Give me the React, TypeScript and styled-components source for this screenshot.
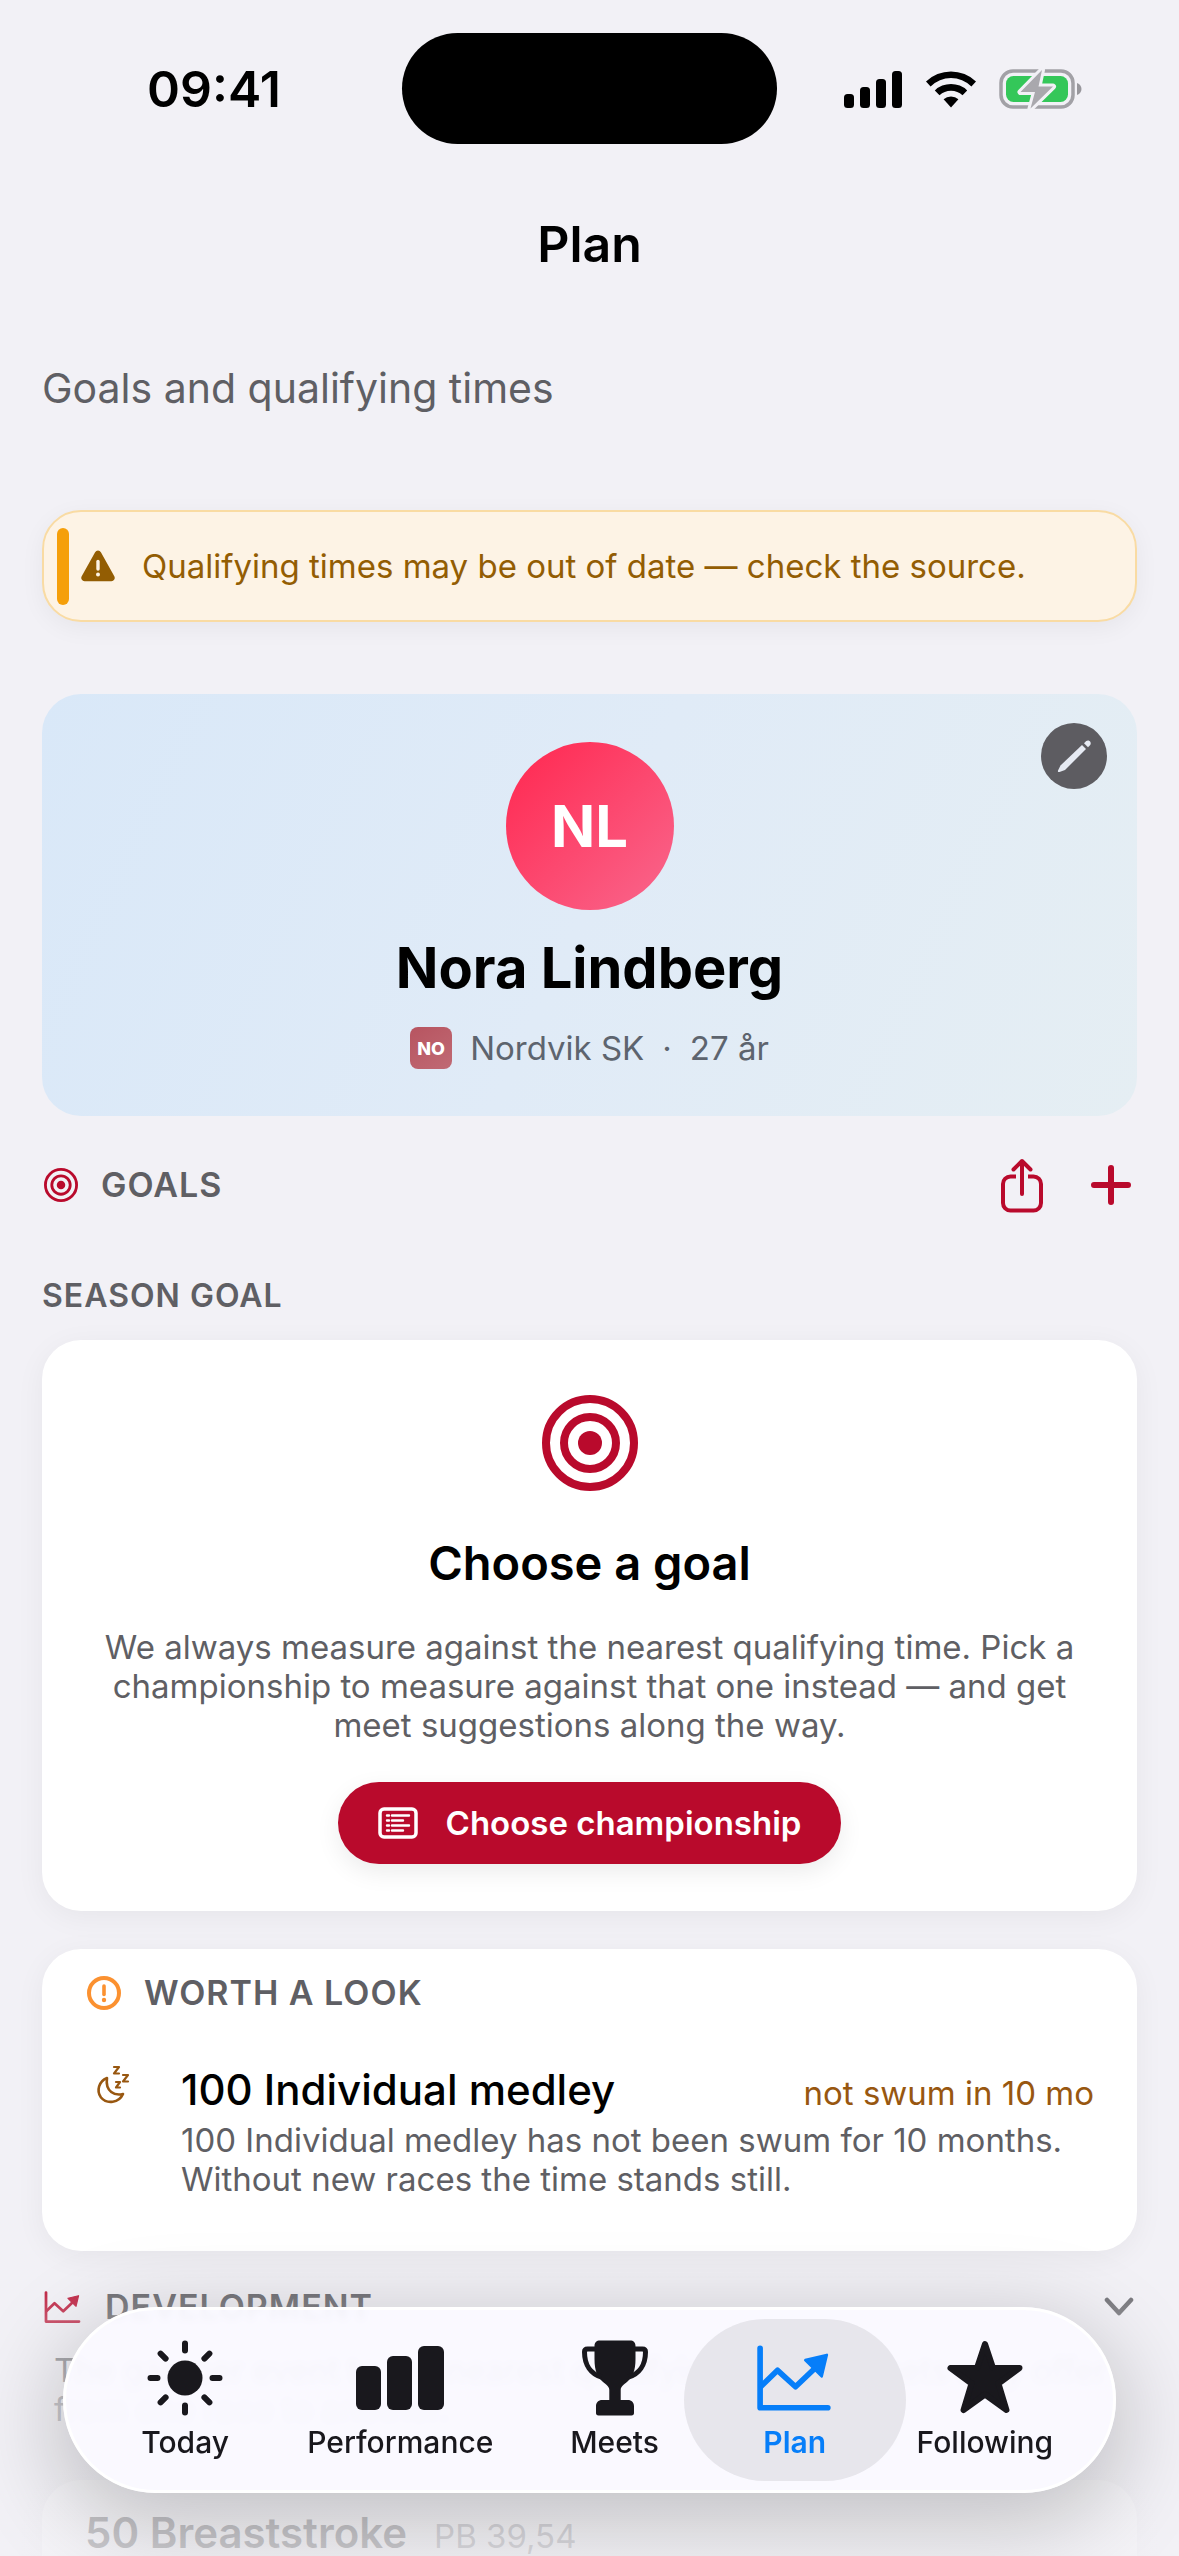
import React from 'react';
import styled, { createGlobalStyle, css } from 'styled-components';

const color = {
  page: '#f2f1f6',
  ink: '#000000',
  muted: '#5f5f64',
  crimson: '#b90a2c',
  amber: '#f59f0a',
  amberText: '#935d03',
  orange: '#fb9130',
  brown: '#985710',
  blue: '#067ef9',
  tabInk: '#19181d',
};

const GlobalStyle = createGlobalStyle`
  *, *::before, *::after { box-sizing: border-box; }
  body {
    margin: 0;
    background: ${color.page};
    color: ${color.ink};
    font-family: Inter, "Noto Sans", sans-serif;
    -webkit-font-smoothing: antialiased;
  }
  h1, h2, h3, p { margin: 0; }
  button {
    margin: 0;
    padding: 0;
    border: 0;
    background: none;
    color: inherit;
    font: inherit;
    cursor: pointer;
  }
  svg { display: block; flex: none; }
`;

const Screen = styled.div`
  position: relative;
  display: flex;
  flex-direction: column;
  height: 100vh;
  overflow: hidden;
  background: ${color.page};
`;

const StatusBar = styled.div`
  display: grid;
  grid-template-columns: 1fr 375px 1fr;
  align-items: center;
  flex: none;
  height: 177px;
`;

const Clock = styled.div`
  padding-left: 26px;
  text-align: center;
  font-size: 50px;
  font-weight: 600;
`;

const Island = styled.div`
  height: 111px;
  border-radius: 56px;
  background: #000;
`;

const StatusIcons = styled.div`
  display: flex;
  align-items: center;
  justify-content: center;
  gap: 22px;
  padding-right: 30px;
`;

const NavBar = styled.header`
  display: flex;
  align-items: center;
  justify-content: center;
  flex: none;
  height: 134px;
`;

const PageTitle = styled.h1`
  font-size: 50px;
  font-weight: 600;
`;

const Content = styled.main`
  flex: 1;
  min-height: 0;
  padding: 50px 42px 0;
  overflow-y: auto;
  scrollbar-width: none;
`;

const Subtitle = styled.p`
  margin-bottom: 95px;
  color: ${color.muted};
  font-size: 41px;
  line-height: 54px;
`;

const Banner = styled.div`
  display: flex;
  align-items: center;
  height: 112px;
  margin-bottom: 72px;
  padding: 0 13px;
  border: 2px solid #f9dba3;
  border-radius: 39px;
  background: #fdf3e5;
  box-shadow: 0 6px 24px rgba(0, 0, 0, 0.05);
  color: ${color.amberText};
  font-size: 33px;
`;

const BannerMark = styled.span`
  width: 12px;
  height: 77px;
  margin-right: 12px;
  border-radius: 6px;
  background: ${color.amber};
`;

const BannerText = styled.p`
  margin-left: 27px;
`;

const ProfileCard = styled.section`
  position: relative;
  display: flex;
  flex-direction: column;
  align-items: center;
  padding: 48px 40px 47px;
  border-radius: 39px;
  background: linear-gradient(115deg, #d9e8f8 0%, #e0ebf7 50%, #e5eef3 100%);
`;

const Avatar = styled.div`
  display: flex;
  align-items: center;
  justify-content: center;
  width: 168px;
  height: 168px;
  margin-bottom: 23px;
  border-radius: 50%;
  background: linear-gradient(135deg, #ff2d55 10%, #f9648a 95%);
  color: #fff;
  font-size: 58px;
  font-weight: 700;
`;

const ProfileName = styled.h2`
  margin-bottom: 24px;
  font-size: 56px;
  font-weight: 700;
  line-height: 70px;
`;

const ProfileMeta = styled.div`
  display: flex;
  align-items: center;
  gap: 18px;
  height: 42px;
  color: #5d646e;
  font-size: 33px;
`;

const ClubBadge = styled.span`
  display: flex;
  align-items: center;
  justify-content: center;
  width: 42px;
  height: 42px;
  border-radius: 8px;
  background: linear-gradient(145deg, #b75460, #c06a74);
  color: #fff;
  font-size: 18px;
  font-weight: 800;
`;

const EditButton = styled.button`
  position: absolute;
  top: 29px;
  right: 30px;
  display: flex;
  align-items: center;
  justify-content: center;
  width: 66px;
  height: 66px;
  border-radius: 50%;
  background: #5d5c61;
`;

const GoalsBar = styled.div`
  display: flex;
  align-items: center;
  justify-content: space-between;
  height: 138px;
  margin-bottom: 22px;
  padding-right: 5px;
`;

const Actions = styled.div`
  display: flex;
  align-items: center;
  gap: 46px;
`;

const SectionHeading = styled.h2`
  display: flex;
  align-items: center;
  gap: 23px;
  padding-left: 2px;
  color: ${color.muted};
  font-size: 34px;
  font-weight: 600;
  line-height: 40px;
  letter-spacing: 1px;
`;

const GroupLabel = styled.h3`
  margin-bottom: 24px;
  color: ${color.muted};
  font-size: 32px;
  font-weight: 600;
  line-height: 40px;
  letter-spacing: 1px;
`;

const card = css`
  border-radius: 39px;
  background: #fff;
  box-shadow: 0 6px 30px rgba(0, 0, 0, 0.05);
`;

const GoalCard = styled.section`
  ${card}
  display: flex;
  flex-direction: column;
  align-items: center;
  margin-bottom: 38px;
  padding: 55px 48px 47px;
`;

const GoalTitle = styled.h3`
  margin: 42px 0 35px;
  font-size: 47px;
  font-weight: 600;
  line-height: 60px;
`;

const GoalText = styled.p`
  margin-bottom: 37px;
  color: ${color.muted};
  font-size: 33px;
  line-height: 39px;
  text-align: center;
`;

const PrimaryButton = styled.button`
  display: flex;
  align-items: center;
  gap: 28px;
  height: 82px;
  padding: 0 40px;
  border-radius: 41px;
  background: ${color.crimson};
  box-shadow: 0 8px 24px rgba(0, 0, 0, 0.08);
  color: #fff;
  font-size: 33px;
  font-weight: 600;
`;

const NoticeCard = styled.section`
  ${card}
  margin-bottom: 36px;
  padding: 24px 43px 52px;
`;

const Notice = styled.article`
  display: grid;
  grid-template-columns: 56px 1fr;
  column-gap: 40px;
  margin-top: 52px;
`;

const NoticeIcon = styled.span`
  display: flex;
  justify-content: center;
`;

const NoticeTop = styled.div`
  display: flex;
  align-items: baseline;
  justify-content: space-between;
  margin-bottom: 6px;
`;

const NoticeTitle = styled.h3`
  font-size: 42px;
  font-weight: 500;
  line-height: 50px;
`;

const NoticeAge = styled.span`
  color: ${color.brown};
  font-size: 33px;
  line-height: 40px;
`;

const NoticeText = styled.p`
  color: ${color.muted};
  font-size: 33px;
  line-height: 39px;
`;

const DevelopmentBar = styled.div`
  display: flex;
  align-items: center;
  justify-content: space-between;
  margin-bottom: 24px;
  padding-right: 3px;
`;

const DevelopmentText = styled.p`
  margin-bottom: 51px;
  padding: 0 12px;
  color: ${color.muted};
  font-size: 33px;
  line-height: 39px;
`;

const EventCard = styled.section`
  ${card}
  display: flex;
  align-items: baseline;
  gap: 27px;
  padding: 28px 43px 60px;
`;

const EventTitle = styled.h3`
  font-size: 42px;
  font-weight: 600;
  line-height: 50px;
`;

const EventBest = styled.span`
  color: ${color.muted};
  font-size: 33px;
  line-height: 40px;
`;

const BottomFade = styled.div`
  position: absolute;
  right: 0;
  bottom: 0;
  left: 0;
  height: 290px;
  background: linear-gradient(
    rgba(242, 241, 246, 0) 0%,
    rgba(242, 241, 246, 0.3) 18%,
    rgba(242, 241, 246, 0.7) 48%,
    rgba(242, 241, 246, 0.84) 100%
  );
  pointer-events: none;
`;

const TabBar = styled.nav`
  position: absolute;
  right: 63px;
  bottom: 63px;
  left: 63px;
  display: grid;
  grid-template-columns: 220fr 210fr 218fr 142fr 238fr;
  height: 186px;
  padding: 0 9px;
  border: 3px solid #fff;
  border-radius: 93px;
  background: rgba(250, 249, 255, 0.95);
  box-shadow: 0 24px 90px 8px rgba(0, 0, 0, 0.21);
  backdrop-filter: blur(3px);
`;

const TabButton = styled.button<{ $active: boolean }>`
  position: relative;
  display: flex;
  flex-direction: column;
  align-items: center;
  gap: 3px;
  padding-top: 27px;
  color: ${(p) => (p.$active ? color.blue : color.tabInk)};
  font-size: 30px;
  font-weight: ${(p) => (p.$active ? 600 : 500)};
  line-height: 40px;

  ${(p) =>
    p.$active &&
    css`
      &::before {
        content: '';
        position: absolute;
        inset: 9px -40px;
        border-radius: 81px;
        background: #e7e6ec;
      }
    `}

  & > * {
    position: relative;
  }
`;

const TabIcon = styled.span`
  display: flex;
  align-items: center;
  justify-content: center;
  height: 82px;
`;

const SignalIcon = () => (
  <svg width="60" height="38" viewBox="0 0 60 38">
    <rect x="1" y="24" width="10" height="14" rx="3.5" />
    <rect x="17" y="17" width="10" height="21" rx="3.5" />
    <rect x="33" y="9" width="10" height="29" rx="3.5" />
    <rect x="49" y="1" width="10" height="37" rx="3.5" />
  </svg>
);

const WifiIcon = () => (
  <svg width="52" height="38" viewBox="0 0 52 38">
    <path d="M1 11.5a36 36 0 0 1 50 0l-4.6 4.9a29 29 0 0 0-40.8 0Z" />
    <path d="M9.8 20.4a23.5 23.5 0 0 1 32.4 0l-4.7 4.9a16.7 16.7 0 0 0-23 0Z" />
    <path d="M18.6 29.3a11 11 0 0 1 14.8 0L26 37.5Z" />
  </svg>
);

const BatteryIcon = () => (
  <svg width="84" height="44" viewBox="0 0 84 44">
    <rect x="2" y="4" width="72" height="36" rx="12" fill="none" stroke="#a2a1a6" strokeWidth="3.5" />
    <path d="M78 16c6 2 6 10 0 12Z" fill="#98979c" />
    <rect x="7" y="9" width="62" height="26" rx="7.5" fill="#34c759" />
    <path
      d="M43 3 21.500 25H36l-4.500 16.500L54 19.500H39.500Z"
      fill="#a9a8ad"
      stroke="#f2f1f6"
      strokeWidth="6"
      strokeLinejoin="round"
      paintOrder="stroke"
    />
  </svg>
);

const WarningIcon = () => (
  <svg width="34" height="32" viewBox="0 0 34 32">
    <path
      d="M14.100 2.200a3.400 3.400 0 0 1 5.800 0L33.300 26.300a3.300 3.300 0 0 1-2.900 4.900H3.600a3.300 3.300 0 0 1-2.900-4.900Z"
      fill={color.amberText}
    />
    <path d="M17 11.500v7.500" stroke="#fdf3e5" strokeWidth="3.400" strokeLinecap="round" />
    <circle cx="17" cy="24.500" r="2" fill="#fdf3e5" />
  </svg>
);

const PencilIcon = () => (
  <svg width="36" height="36" viewBox="0 0 36 36" fill="#e6eaf3">
    <path d="M26 7 30 11 9 32 3.500 34Q1.500 34.500 2 32.500L4.500 27.500Z" />
    <path d="m28 5.200 2.200-2.200c2.800-1.800 5.800 1.200 4 4L32 9.200Z" />
  </svg>
);

const TargetIcon = ({ size }: { size: number }) => (
  <svg width={size} height={size} viewBox="0 0 96 96" fill="none" stroke={color.crimson}>
    <circle cx="48" cy="48" r="44" strokeWidth="8" />
    <circle cx="48" cy="48" r="26" strokeWidth="8" />
    <circle cx="48" cy="48" r="12" fill={color.crimson} stroke="none" />
  </svg>
);

const ShareIcon = () => (
  <svg
    width="44"
    height="56"
    viewBox="0 0 44 56"
    fill="none"
    stroke={color.crimson}
    strokeWidth="4"
    strokeLinecap="butt"
    strokeLinejoin="round"
  >
    <path d="M16 19.500h-5.500a7.500 7.500 0 0 0-7.500 7.500v19a7.500 7.500 0 0 0 7.500 7.500h23a7.500 7.500 0 0 0 7.500-7.500V27a7.500 7.500 0 0 0-7.500-7.500H28" />
    <path d="M22 37V4M13.500 12.500 22 4l8.500 8.500" strokeLinecap="round" />
  </svg>
);

const PlusIcon = () => (
  <svg width="42" height="42" viewBox="0 0 42 42" stroke={color.crimson} strokeWidth="6" strokeLinecap="round">
    <path d="M21 4v34M4 21h34" />
  </svg>
);

const ListIcon = () => (
  <svg width="40" height="32" viewBox="0 0 40 32" fill="none" stroke="#fff">
    <rect x="2" y="2" width="36" height="28" rx="4" strokeWidth="3.500" />
    <path
      d="M9 8.500h2M14 8.500h17M9 13.500h2M14 13.500h11M9 18.500h2M14 18.500h17M9 23.500h2M14 23.500h11"
      strokeWidth="2.400"
      strokeLinecap="round"
    />
  </svg>
);

const AlertIcon = () => (
  <svg width="34" height="34" viewBox="0 0 34 34" fill="none" stroke={color.orange}>
    <circle cx="17" cy="17" r="15" strokeWidth="4" />
    <path d="M17 10v8.500" strokeWidth="3.600" strokeLinecap="round" />
    <circle cx="17" cy="24" r="2.200" fill={color.orange} stroke="none" />
  </svg>
);

const SleepIcon = () => (
  <svg
    width="38"
    height="44"
    viewBox="-1 3 38 44"
    fill="none"
    stroke={color.brown}
    strokeWidth="2.600"
    strokeLinejoin="round"
    strokeLinecap="round"
  >
    <path d="M12 16C4 19 1 29 6 35.500c6 7 18 5.500 22-3.500-8 2-18-2-16-16Z" />
    <path d="M19 5h5l-5 6.500h5M28 13h5l-5 6.500h5M21 20h4l-4 5.500h4" strokeWidth="2.200" />
  </svg>
);

const ChartIcon = ({ size, tint }: { size: number; tint: string }) => (
  <svg
    width={size}
    height={size}
    viewBox="0 0 76 76"
    fill="none"
    stroke={tint}
    strokeWidth="5.500"
    strokeLinejoin="round"
    strokeLinecap="round"
  >
    <path d="M4 9v58h66" />
    <path d="M5 46 21 30.500l17.500 16L60 26" />
    <path d="m48 20.500 21-5-5 21Z" fill={tint} strokeWidth="2.500" />
  </svg>
);

const ChevronIcon = () => (
  <svg
    width="30"
    height="20"
    viewBox="0 0 30 20"
    fill="none"
    stroke={color.muted}
    strokeWidth="4.500"
    strokeLinecap="round"
    strokeLinejoin="round"
  >
    <path d="m3 3 12 13L27 3" />
  </svg>
);

const SunIcon = () => (
  <svg width="76" height="76" viewBox="0 0 76 76" stroke="currentColor" strokeWidth="6" strokeLinecap="round">
    <circle cx="38" cy="38" r="17.500" fill="currentColor" stroke="none" />
    <path d="M38 3.500v7M38 65.500v7M3.500 38h7M65.500 38h7M13.600 13.600l5 5M57.400 57.400l5 5M13.600 62.400l5-5M57.400 18.600l5-5" />
  </svg>
);

const BarsIcon = () => (
  <svg width="88" height="76" viewBox="0 0 88 76" fill="currentColor">
    <rect x="0" y="26" width="25" height="44" rx="6" />
    <rect x="31" y="16" width="25" height="54" rx="6" />
    <rect x="62" y="6" width="26" height="64" rx="6" />
  </svg>
);

const TrophyIcon = () => (
  <svg width="68" height="76" viewBox="0 0 68 76" fill="currentColor">
    <path d="M19 .5h30c3.500 0 5.500 2 5.500 5.500v13c0 12-3 18-8 22.500-4 3.500-6.800 5-6.800 8.500v10h7c4 0 6.300 2.500 6.300 6.500v6.500c0 1.500-.8 2.500-2.500 2.500h-33c-1.700 0-2.500-1-2.500-2.500v-6.500c0-4 2.300-6.500 6.300-6.500h7V50c0-3.500-2.800-5-6.800-8.500-5-4.500-8-10.500-8-22.500V6c0-3.500 2-5.500 5.500-5.500Z" />
    <path
      d="M16 9H6.500C4.500 9 3.500 10 3.500 12c0 13 6.500 22 17 25M52 9h9.500c2 0 3 1 3 3 0 13-6.500 22-17 25"
      fill="none"
      stroke="currentColor"
      strokeWidth="5"
    />
  </svg>
);

const StarIcon = () => (
  <svg width="76" height="76" viewBox="0 0 76 76">
    <path
      d="M38 4 46 28h26.500L51.500 43.500 59.500 70 38 54.500 16.500 70l8-26.500L3.500 28H30Z"
      fill="currentColor"
      stroke="currentColor"
      strokeWidth="6"
      strokeLinejoin="round"
    />
  </svg>
);

const tabs = [
  { label: 'Today', icon: <SunIcon /> },
  { label: 'Performance', icon: <BarsIcon /> },
  { label: 'Meets', icon: <TrophyIcon /> },
  { label: 'Plan', icon: <ChartIcon size={78} tint={color.blue} /> },
  { label: 'Following', icon: <StarIcon /> },
];

export default function App() {
  const [activeTab, setActiveTab] = React.useState('Plan');

  return (
    <>
      <GlobalStyle />
      <Screen>
        <StatusBar>
          <Clock>09:41</Clock>
          <Island />
          <StatusIcons>
            <SignalIcon />
            <WifiIcon />
            <BatteryIcon />
          </StatusIcons>
        </StatusBar>

        <NavBar>
          <PageTitle>Plan</PageTitle>
        </NavBar>

        <Content>
          <Subtitle>Goals and qualifying times</Subtitle>

          <Banner role="status">
            <BannerMark />
            <WarningIcon />
            <BannerText>Qualifying times may be out of date — check the source.</BannerText>
          </Banner>

          <ProfileCard>
            <Avatar>NL</Avatar>
            <ProfileName>Nora Lindberg</ProfileName>
            <ProfileMeta>
              <ClubBadge>NO</ClubBadge>
              <span>Nordvik SK</span>
              <span>·</span>
              <span>27 år</span>
            </ProfileMeta>
            <EditButton aria-label="Edit profile">
              <PencilIcon />
            </EditButton>
          </ProfileCard>

          <GoalsBar>
            <SectionHeading>
              <TargetIcon size={34} />
              GOALS
            </SectionHeading>
            <Actions>
              <button aria-label="Share goals">
                <ShareIcon />
              </button>
              <button aria-label="Add goal">
                <PlusIcon />
              </button>
            </Actions>
          </GoalsBar>

          <GroupLabel>SEASON GOAL</GroupLabel>
          <GoalCard>
            <TargetIcon size={96} />
            <GoalTitle>Choose a goal</GoalTitle>
            <GoalText>
              We always measure against the nearest qualifying time. Pick a championship to measure
              against that one instead — and get meet suggestions along the way.
            </GoalText>
            <PrimaryButton>
              <ListIcon />
              Choose championship
            </PrimaryButton>
          </GoalCard>

          <NoticeCard>
            <SectionHeading>
              <AlertIcon />
              WORTH A LOOK
            </SectionHeading>
            <Notice>
              <NoticeIcon>
                <SleepIcon />
              </NoticeIcon>
              <div>
                <NoticeTop>
                  <NoticeTitle>100 Individual medley</NoticeTitle>
                  <NoticeAge>not swum in 10 mo</NoticeAge>
                </NoticeTop>
                <NoticeText>
                  100 Individual medley has not been swum for 10 months. Without new races the time
                  stands still.
                </NoticeText>
              </div>
            </Notice>
          </NoticeCard>

          <DevelopmentBar>
            <SectionHeading>
              <ChartIcon size={38} tint={color.crimson} />
              DEVELOPMENT
            </SectionHeading>
            <button aria-label="Collapse development">
              <ChevronIcon />
            </button>
          </DevelopmentBar>
          <DevelopmentText>
            The gap per event to the nearest qualifying time — meets may offer from one race to
            another.
          </DevelopmentText>

          <EventCard>
            <EventTitle>50 Breaststroke</EventTitle>
            <EventBest>PB 39,54</EventBest>
          </EventCard>
        </Content>

        <BottomFade />
        <TabBar aria-label="Main">
          {tabs.map(({ label, icon }) => (
            <TabButton
              key={label}
              $active={label === activeTab}
              aria-current={label === activeTab ? 'page' : undefined}
              onClick={() => setActiveTab(label)}
            >
              <TabIcon>{icon}</TabIcon>
              <span>{label}</span>
            </TabButton>
          ))}
        </TabBar>
      </Screen>
    </>
  );
}
